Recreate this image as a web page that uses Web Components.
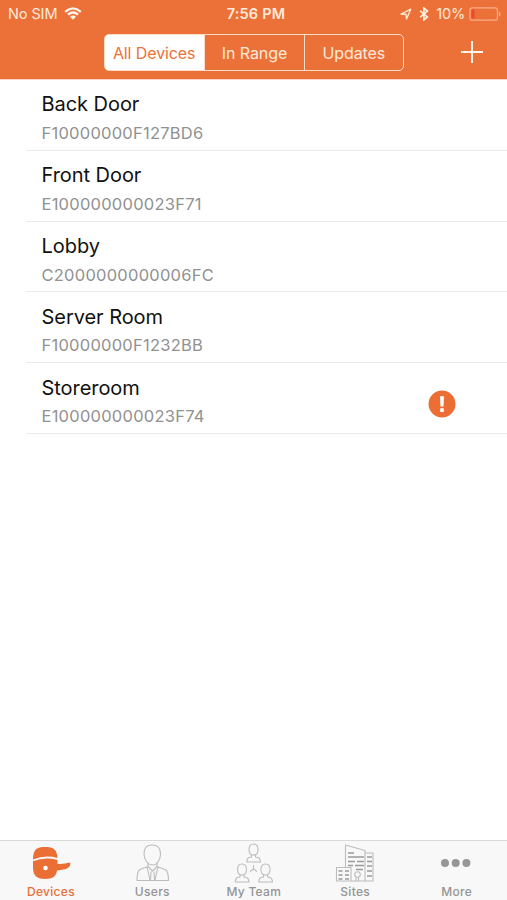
<!DOCTYPE html>
<html lang="en">
<head>
<meta charset="utf-8">
<title>Devices</title>
<style>
html,body{margin:0;height:100%}
body{font-family:Inter,"Liberation Sans",sans-serif;background:#fff;overflow:hidden}
</style>
</head>
<body>
<app-screen></app-screen>
<script>
const define = (name, html, setup) => customElements.define(name, class extends HTMLElement {
  constructor() {
    super();
    this.attachShadow({ mode: 'open' }).innerHTML = html;
  }
  connectedCallback() { if (setup) setup(this, this.shadowRoot); }
});

define('status-bar', `
<style>
:host{display:grid;grid-template-columns:1fr auto 1fr;align-items:center;height:28px;padding:0 6px 0 8px;box-sizing:border-box;color:#ffeadb;font-size:14.5px;line-height:28px}
.left,.right{display:flex;align-items:center}
.right{justify-content:flex-end}
.left span{letter-spacing:-.1px}
.time{font-weight:600;letter-spacing:.2px;padding-left:3px}
.pct{letter-spacing:-.15px}
svg{display:block;flex:none}
</style>
<div class="left"><span>No SIM</span>
<svg style="margin-left:7px;margin-top:-2px" width="18" height="13" viewBox="0 0 18 13" fill="none" stroke="#fff5ec" stroke-width="2.3"><path d="M1.2 4.8Q9-2 16.8 4.8M4 7.7Q9 3.4 14 7.7"/><path d="M9 12.8L6 9.8Q9 7.3 12 9.8Z" fill="#fff5ec" stroke="none"/></svg></div>
<span class="time">7:56 PM</span>
<div class="right">
<svg width="12" height="12" viewBox="0 0 12 12" fill="none" stroke="#ffe4d2" stroke-width="1.4" stroke-linejoin="round"><path d="M1 6.2L10.8 1.2L6.500 11L6 6.300Z"/></svg>
<svg style="margin:0 7px" width="10" height="14" viewBox="0 0 10 14" fill="none" stroke="#fff0e4" stroke-width="1.7"><path d="M1.2 3.9L8.4 9.9L4.9 12.9V1.1L8.4 4.1L1.2 10.1"/></svg>
<span class="pct">10%</span>
<svg style="margin-left:4px;margin-top:-1px" width="32" height="14" viewBox="0 0 32 14"><rect x=".9" y=".8" width="27.5" height="12.4" rx="2.5" fill="none" stroke="#f5ad87" stroke-width="1.2"/><rect x="2.5" y="2.5" width="3" height="9" rx=".6" fill="#e9492c"/><path d="M29.8 4.5Q31.6 5 31.6 7T29.8 9.5Z" fill="#f5ad87"/></svg>
</div>`);

define('segment-item', `
<style>
:host{display:flex;flex:1;align-items:center;justify-content:center;color:#ffe9da;font-size:16px;border-left:1.5px solid #ffdcc5;letter-spacing:-.1px;white-space:nowrap}
:host(:first-child){border-left:0;padding-right:1px}
:host([selected]){background:#fff;color:#ec7137}
</style><slot></slot>`);

define('segmented-control', `
<style>
:host{display:flex;width:300px;height:37px;box-sizing:border-box;border:1.5px solid #ffdcc5;border-radius:5px;overflow:hidden}
:host{background:linear-gradient(90deg,#fff 50px,transparent 50px)}
</style><slot></slot>`);

define('nav-bar', `
<style>
:host{display:grid;grid-template-columns:104px 300px 1fr;height:51px;padding-top:6px;box-sizing:border-box}
.add{justify-self:end;margin:7px 24px 0 0;display:block}
</style>
<span></span><slot></slot>
<svg class="add" width="22" height="22" viewBox="0 0 22 22" stroke="#fff4ec" stroke-width="2"><path d="M0 11H22M11 0V22"/></svg>`);

define('device-row', `
<style>
:host{display:flex;height:70.8px;margin-left:26px;padding-left:15.5px;box-sizing:border-box;border-bottom:1.5px solid #ebebeb;justify-content:space-between}
.name{font-size:20px;line-height:26px;margin-top:11.4px;color:#111;letter-spacing:-.05px}
.id{font-size:16.5px;line-height:22px;margin-top:4.6px;color:#919191;letter-spacing:.24px}
.alert{display:none;margin:27px 51px 0 0;width:28px;height:28px}
:host([alert]) .alert{display:block}
</style>
<div><div class="name"></div><div class="id"></div></div>
<svg class="alert" viewBox="0 0 28 28"><circle cx="14" cy="14" r="13.5" fill="#eb6e35"/><path d="M12 6.300H16L15.500 16.500H12.500Z" fill="#fff"/><rect x="12.2" y="18.3" width="3.6" height="3.6" rx=".5" fill="#fff"/></svg>`,
(el, root) => {
  root.querySelector('.name').textContent = el.getAttribute('name');
  root.querySelector('.id').textContent = el.getAttribute('serial');
});

const person = 'M48.5 6.500C48.500 3 50 1 53 1S57.500 3 57.500 6.500C57.500 10 55.500 12 53 12S48.500 10 48.500 6.500ZM51 12V14L48.500 14.500Q46.500 15 46.300 19H60Q59.500 15 57.500 14.500L55 14V12';
const icons = {
  devices: `<g stroke="none" fill="#eb6e35"><path d="M33 13.5C33 3 37 1 45 1S57 3 57.5 12Q45 8.5 33 13.500Z"/><path d="M33 15.3Q45 10.500 57.500 14V17.800Q64 18.300 69.500 16.500Q71 17 69.800 20Q68.500 23.500 57 24.500C56.500 29.500 53 33 45 33C36 33 33 29 33 21Z"/></g><circle cx="45.500" cy="22" r="2.300" fill="#fff" stroke="none"/>`,
  users: `<path d="M44 11C44 5 46.500 2 52 2S60.500 5 60.500 11C60.500 17 57 22 52.500 22S44 17 44 11ZM48 20.500V23.500L40 26.500Q37 28 37 37.500H68.500Q68.500 28 65 26.500L57 23.500V20.500M48 23.500L52.500 28L57 23.500M47 24L50 37M58 24L55 37M51 28.500L50.500 37M54 28.500L54.500 37"/>`,
  team: `<path d="${person}"/><path transform="translate(-11.5 20)" d="${person}"/><path transform="translate(12 20)" d="${person}"/><path d="M53 22V26L49.500 28.500M53 26L56.500 28.500"/>`,
  sites: `<path d="M42.500 24V2L62 7.500V38M62 10H70V38H33.500V24.500H48V38M53 38V34.500M55.500 38V34.500"/><circle cx="54.500" cy="31.500" r="2.800"/><path stroke="#999" stroke-width="1.500" d="M45 10H51M45 14H61M45 18.500H52M54 18.500H61M45 22.500H50M52 22.500H61M53 26.500H60M64 14H69M64 18.500H69M64 23H69M64 28H69M64 33H69M35.500 28H39.500M42 28H46M35.500 32H39.500M42 32H46M35.500 36H39.500M42 36H46"/>`,
  more: `<g fill="#969696" stroke="none"><circle cx="44" cy="17" r="4"/><circle cx="54.700" cy="17" r="4"/><circle cx="65.400" cy="17" r="4"/></g>`
};

define('tab-item', `
<style>
:host{display:flex;flex:1;flex-direction:column;align-items:center;color:#949494;font-size:12px;font-weight:500;letter-spacing:.3px}
:host([selected]){color:#eb6e35}
svg{display:block;width:101px;height:40px;margin-top:5px;overflow:visible}
span{line-height:14px;margin-top:-1.5px;padding-left:.5px}
</style>
<svg fill="none" stroke="#bcbcbc" stroke-width="1.1" stroke-linejoin="round"></svg><span><slot></slot></span>`,
(el, root) => {
  const svg = root.querySelector('svg');
  svg.setAttribute('viewBox', (el.getAttribute('shift') || '0 0') + ' 101 40');
  svg.innerHTML = icons[el.getAttribute('icon')];
});

define('tab-bar', `
<style>:host{display:flex;height:60px;box-sizing:border-box;background:#f8f8f8;border-top:1.5px solid #d9d9d9}</style><slot></slot>`);

define('app-screen', `
<style>
:host{display:flex;flex-direction:column;width:507px;height:900px;background:#fff}
header{background:#ec7138;height:80px;box-sizing:border-box;border-bottom:1px solid #f9d5bf;flex:none}
main{flex:1}
</style>
<header>
<status-bar></status-bar>
<nav-bar><segmented-control><segment-item selected>All Devices</segment-item><segment-item>In Range</segment-item><segment-item>Updates</segment-item></segmented-control></nav-bar>
</header>
<main>
<device-row name="Back Door" serial="F10000000F127BD6"></device-row>
<device-row name="Front Door" serial="E100000000023F71"></device-row>
<device-row name="Lobby" serial="C2000000000006FC"></device-row>
<device-row name="Server Room" serial="F10000000F1232BB"></device-row>
<device-row name="Storeroom" serial="E100000000023F74" alert></device-row>
</main>
<tab-bar>
<tab-item icon="devices" selected>Devices</tab-item><tab-item icon="users" shift="2 3">Users</tab-item><tab-item icon="team" shift="2.5 3">My Team</tab-item><tab-item icon="sites" shift="1 3">Sites</tab-item><tab-item icon="more" shift="5 0">More</tab-item>
</tab-bar>`);
</script>
</body>
</html>
